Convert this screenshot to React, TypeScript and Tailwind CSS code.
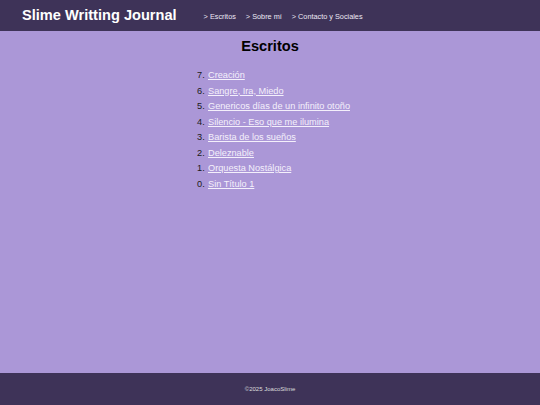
export default function App() {
  const items = [
    "Creación",
    "Sangre, Ira, Miedo",
    "Genericos días de un infinito otoño",
    "Silencio - Eso que me ilumina",
    "Barista de los sueños",
    "Deleznable",
    "Orquesta Nostálgica",
    "Sin Título 1",
  ];
  return (
    <div className="flex min-h-[405px] flex-col bg-[#ab97d7]" style={{ fontFamily: '"Liberation Sans", Arial, sans-serif' }}>
      <header className="flex h-[31px] items-center bg-[#3e3358] pl-[22px]">
        <span className="text-[14.6px] font-bold text-white">Slime Writting Journal</span>
        <nav className="ml-[27px] mt-[4px] flex gap-[10px] text-[7.3px] text-[#ece8f4]">
          <a>&gt; Escritos</a>
          <a>&gt; Sobre mí</a>
          <a>&gt; Contacto y Sociales</a>
        </nav>
      </header>
      <main className="flex-1">
        <h1 className="mt-[6px] text-center text-[14.6px] font-bold leading-[18px] text-black">Escritos</h1>
        <ol className="mt-[13px] flex flex-col pl-[197px] text-[9.2px] leading-[15.5px]">
          {items.map((t, i) => (
            <li key={t} className="flex">
              <span className="w-[11px] text-[#1a1a1a]">{items.length - 1 - i}.</span>
              <a className="text-[#f4f0fb] underline">{t}</a>
            </li>
          ))}
        </ol>
      </main>
      <footer className="flex h-[32px] items-center justify-center bg-[#3e3358] text-[6px] text-[#ddd]">
        ©2025 JoacoSlime
      </footer>
    </div>
  );
}
